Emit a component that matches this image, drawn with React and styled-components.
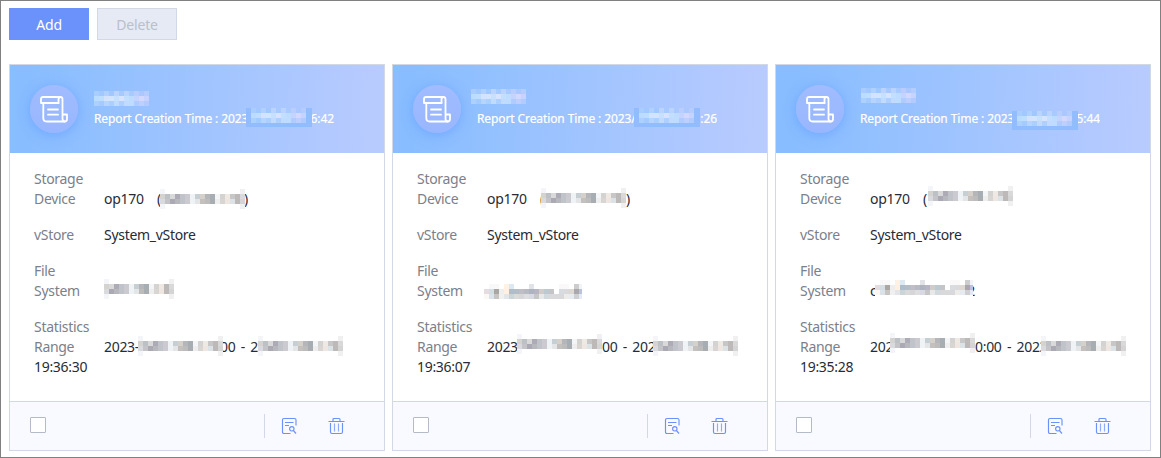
import React from "react";
import styled, { createGlobalStyle } from "styled-components";

const GlobalStyle = createGlobalStyle`
  * { box-sizing: border-box; }
  body { margin: 0; background: #fff; }
`;

const Page = styled.main`
  width: 1161px;
  height: 458px;
  padding: 7px 8px;
  border: 1px solid #808080;
  background: #fff;
  font: 14px/20px "Noto Sans", "Open Sans", sans-serif;
  color: #282b33;
  overflow: hidden;
`;

const Toolbar = styled.div`
  display: flex;
  gap: 8px;
  margin-bottom: 24px;
`;

const Button = styled.button`
  width: 80px;
  height: 32px;
  padding: 2px 0 0;
  border: 1px solid ${(p) => (p.disabled ? "#d3d8e6" : "#6b91fb")};
  background: ${(p) => (p.disabled ? "#e6eaf5" : "#6b91fb")};
  color: ${(p) => (p.disabled ? "#babfca" : "#fff")};
  font: inherit;
  letter-spacing: -0.15px;
`;

const Cards = styled.div`
  display: flex;
  gap: 7px;
`;

const Card = styled.article`
  flex: none;
  width: 376px;
  height: 387px;
  display: flex;
  flex-direction: column;
  border: 1px solid #d3d8e6;
`;

const Header = styled.header`
  flex: none;
  height: 88px;
  display: flex;
  align-items: flex-start;
  padding: 20px 0 0 20px;
  background: linear-gradient(92deg, #88bdff 5%, #b8cbff 98%);
`;

const Badge = styled.div`
  flex: none;
  width: 48px;
  height: 48px;
  border-radius: 50%;
  background: linear-gradient(#a1bcff, #98b6ff);
  box-shadow: 0 2px 12px rgba(85, 145, 255, 0.5);
`;

const Heading = styled.div`
  margin-left: 16px;
  font-size: 12px;
  letter-spacing: -0.1px;
  color: #fff;
  -webkit-text-stroke: 0.2px #fff;
`;

const Title = styled.div`
  height: 24px;
  margin-left: ${(p) => p.$left}px;
  padding-top: ${(p) => p.$top}px;
`;

const Line = styled.div`
  display: flex;
  height: 20px;
  white-space: pre;
`;

const Piece = styled.span`
  flex: none;
  display: flex;
  justify-content: ${(p) => (p.$end ? "flex-end" : "flex-start")};
  width: ${(p) => p.$width}px;
  overflow: hidden;
`;

const Pixels = styled.svg`
  flex: none;
  display: block;
  margin-top: ${(p) => p.$shift || 0}px;
`;

const MaskBox = styled.span`
  flex: none;
  width: 66px;
  height: 19px;
  padding-left: 5px;
  margin-top: ${(p) => p.$shift}px;
  background: #91bdff;
`;

const Body = styled.div`
  flex: 1;
  display: flex;
  flex-direction: column;
  gap: 16px;
  padding: 16px 0 0 24px;
  letter-spacing: -0.3px;
  word-spacing: 2px;
`;

const Field = styled.div`
  display: grid;
  grid-template-columns: 70px 1fr;
  align-items: end;
`;

const Label = styled.div`
  width: 60px;
  color: #7b808b;
`;

const FileValue = styled.div`
  margin-left: ${(p) => p.$offset || 0}px;
`;

const Overflow = styled.div`
  grid-column: 1 / -1;
`;

const Footer = styled.footer`
  flex: none;
  height: 49px;
  display: flex;
  align-items: center;
  padding: 0 39px 0 20px;
  border-top: 1px solid #d3d8e6;
  background: #f9faff;
`;

const Checkbox = styled.span`
  width: 16px;
  height: 16px;
  margin-bottom: 2px;
  border: 1px solid #b5bac8;
  border-radius: 1px;
  background: #fff;
`;

const Divider = styled.span`
  width: 1px;
  height: 24px;
  margin: 0 16px 0 auto;
  background: #d3d8e6;
`;

const ActionIcon = styled.svg`
  display: block;
  width: 17px;
  height: 18px;
  margin-right: ${(p) => p.$gap || 0}px;
  fill: none;
  stroke: #6b91fb;
  stroke-width: 1.15;
`;

const GREY = [
  ["#f3f5f8", "", "", "", "", "", "", "", "", "", "", "", "", "", "", "", "#f0f0f1"],
  ["#d5d3cf", "#bcc1c6", "#d9d9da", "#adabb5", "#c1c3ca", "#cacad0", "#f0f3f6", "#c6d0d4", "#d5d1ca", "#b5b6b9", "#a6adb3", "#f3f5f7", "#d4d3d2", "#efe9e4", "#c7c7c8", "#bdb9b9", "#d9d9da"],
  ["#d9dadd", "#c4c4c8", "#abaab4", "#b7b8bd", "#c1c3ca", "#cacad0", "#f0f3f6", "#e3e5e6", "#c4c0bd", "#bcbcbd", "#a7adb1", "#eeeeee", "#d8d5d3", "#efe6e1", "#dce3e6", "#bdb9b9", "#d4d4d5"],
  ["#f3f5f8", "", "", "", "", "", "", "", "", "", "", "", "", "", "", "", "#f0f0f1"],
];
const SHORT_COLUMNS = [0, 2, 3, 4, 5, 6, 7, 9, 10, 11, 12, 13, 15, 16];
const GREY_SHORT = GREY.map((row) => SHORT_COLUMNS.map((i) => row[i]));
const NAME = [
  ["", "#f8f8f9", "#f8f8f9", "", "#fff2e4", "#dce9f3", "", "", "", "#e1e3e7", "", "", "", "", "", "#faf8f8", "#faf8f8", "", "#cdcdd0", "#f2f3f7"],
  ["#e4dcde", "#d4dde1", "#aaa6a3", "#eeeeef", "#fff0e2", "#aebdcb", "#b2bdc6", "#bfbdc6", "#b7b9c3", "#aeb4bf", "#b7b4c3", "#d1ccc9", "#bcc9d1", "#c5c5c7", "", "#d8dbe0", "#dadadd", "#ded8d3", "#aaa8ac", "#bdc0df"],
  ["#fbf7f4", "#d9e3e9", "#c7c4c2", "#f0f0f1", "#e3e6e9", "#cbd4d6", "#dadada", "#d6d6d9", "#dedddf", "#d8d9e2", "#c7c6c7", "#e7e9e8", "#d2dadd", "#d9d9db", "#d9d9dc", "#d9d9dc", "#eeece9", "#e6eaf1", "#cfcfd2", "#e4e9f9"],
];
const WHITE = [
  ["#a9cdff", "#a1c9ff", "#b0d0ff", "#a1c7ff", "#bbd4ff", "#a6c9ff", "#bad3ff", "#a8caff", "#b9ceff", "#aac8ff", "#b5ccff"],
  ["#b9dcff", "#bddeff", "#d2e2ff", "#d3e4ff", "#c6e1ff", "#d8e3ff", "#c3dfff", "#bddcff", "#c4d3ff", "#d2d8ff", "#c4d3ff"],
  ["#add1ff", "#a4cbff", "#b5d4ff", "#abcfff", "#c1dbff", "#add0ff", "#c0dbff", "#bddcff", "#b0cbff", "#bccfff", "#b1cbff"],
];

function Mosaic({ cells, width, shift }) {
  const w = width || cells[0].length * 5;
  return (
    <Pixels width={w} height={cells.length * 5} $shift={shift} shapeRendering="crispEdges" aria-hidden="true">
      {cells.map((row, y) =>
        row.map((c, x) => c && <rect key={`${x}-${y}`} x={x * 5} y={y * 5} width="5" height="5" fill={c} />)
      )}
    </Pixels>
  );
}

const text = (value, width, end) => ({ value, width, end });
const grey = (shift) => ({ cells: GREY, shift });
const name = (shift) => ({ cells: NAME, width: 98, shift });

function Value({ parts }) {
  return (
    <Line>
      {parts.map((p, i) =>
        p.cells ? (
          <Mosaic key={i} {...p} />
        ) : (
          <Piece key={i} $width={p.width} $end={p.end}>
            <span>{p.value}</span>
          </Piece>
        )
      )}
    </Line>
  );
}

const ReportIcon = () => (
  <svg width="48" height="48" viewBox="0 0 48 48" fill="none" stroke="#fff" strokeWidth="1.8" strokeLinejoin="round" strokeLinecap="round" aria-hidden="true">
    <path d="M28.5 18H11V14.2Q11 12 13.2 12H30.3Q32.5 12 32.5 14.2V33.5Q32.5 36.5 34.7 36.5Q37 36.5 37 34V29.5H32.5" />
    <path d="M30.5 12Q28.5 12 28.5 14.5V18M13.3 18V33Q13.3 36.5 16.8 36.5H34.7" />
    <path d="M18 24.5H28M18 29.7H28" />
  </svg>
);

const ViewIcon = () => (
  <ActionIcon $gap={30} viewBox="0 0 17 18" aria-hidden="true">
    <path d="M9.5 16.5H3Q1.5 16.5 1.5 15V3Q1.5 1.5 3 1.5H13.5Q15 1.5 15 3V8.5" />
    <path d="M4 5.5H12.5M4 8.5H8" />
    <circle cx="10.8" cy="11.8" r="2.2" />
    <path d="M12.4 13.5L15 16.5" />
  </ActionIcon>
);

const TrashIcon = () => (
  <ActionIcon viewBox="0 0 17 18" aria-hidden="true">
    <path d="M.5 4.500H16.500M5 4.500V2.500Q5 1.500 6 1.500H11Q12 1.500 12 2.500V4.500" />
    <path d="M2.500 6V15Q2.500 16.500 4 16.500H13Q14.500 16.500 14.500 15V6" />
    <path d="M6.500 6.500V14.500M10.500 6.500V14.500" strokeOpacity=".75" />
  </ActionIcon>
);

const REPORTS = [
  {
    title: { left: 0, top: 6 },
    date: "2023",
    before: 152,
    maskShift: -1,
    after: ["6:42", 22],
    device: [text("op170", 53), text("(", 3), grey(0), text(")", 3, true)],
    file: [{ cells: GREY_SHORT, shift: -2 }],
    range: [text("2023-", 34), grey(-1), text("00 - 2", 35, true), grey(-1)],
    end: "19:36:30",
  },
  {
    title: { left: -6, top: 4 },
    date: "2023/",
    before: 157,
    maskShift: -1,
    after: [":26", 17],
    device: [text("op170", 53), text("(", 1), grey(-1), text(")", 4, true)],
    file: [name(3)],
    fileOffset: -3,
    range: [text("2023", 30), grey(-3), text("00 - 202", 51), grey(-1)],
    end: "19:36:07",
  },
  {
    title: { left: 1, top: 3 },
    date: "2023",
    before: 152,
    maskShift: 2,
    after: ["5:44", 22],
    device: [text("op170", 53), text("(", 5), grey(-3)],
    file: [text("c", 5), name(-1), text("2", 2, true)],
    range: [text("202", 20), grey(-4), text("0:00 - 2023", 66), grey(-1)],
    end: "19:35:28",
  },
];

function ReportCard({ report }) {
  return (
    <Card>
      <Header>
        <Badge>
          <ReportIcon />
        </Badge>
        <Heading>
          <Title $left={report.title.left} $top={report.title.top}>
            <Mosaic cells={WHITE} />
          </Title>
          <Line>
            <Piece $width={report.before}>{`Report Creation Time : ${report.date}`}</Piece>
            <MaskBox $shift={report.maskShift}>
              <Mosaic cells={WHITE} />
            </MaskBox>
            <Piece $width={report.after[1]} $end>
              <span>{report.after[0]}</span>
            </Piece>
          </Line>
        </Heading>
      </Header>
      <Body>
        <Field>
          <Label>Storage Device</Label>
          <Value parts={report.device} />
        </Field>
        <Field>
          <Label>vStore</Label>
          <Line>System_vStore</Line>
        </Field>
        <Field>
          <Label>File System</Label>
          <FileValue $offset={report.fileOffset}>
            <Value parts={report.file} />
          </FileValue>
        </Field>
        <Field>
          <Label>Statistics Range</Label>
          <Value parts={report.range} />
          <Overflow>{report.end}</Overflow>
        </Field>
      </Body>
      <Footer>
        <Checkbox />
        <Divider />
        <ViewIcon />
        <TrashIcon />
      </Footer>
    </Card>
  );
}

export default function App() {
  return (
    <>
      <GlobalStyle />
      <Page>
        <Toolbar>
          <Button>Add</Button>
          <Button disabled>Delete</Button>
        </Toolbar>
        <Cards>
          {REPORTS.map((r) => (
            <ReportCard key={r.end} report={r} />
          ))}
        </Cards>
      </Page>
    </>
  );
}
